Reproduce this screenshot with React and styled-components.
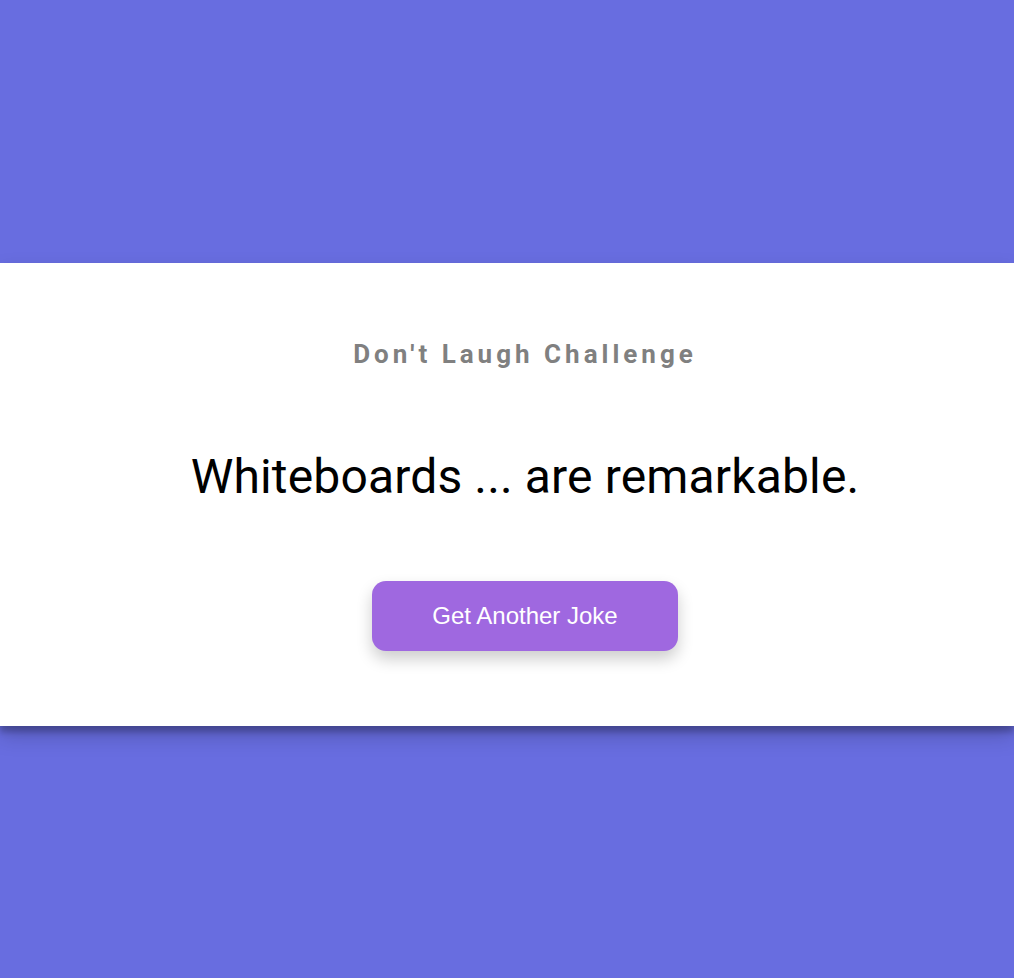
import React from "react";
import styled, { createGlobalStyle } from "styled-components";

const GlobalStyle = createGlobalStyle`
  html, body {
    margin: 0;
    padding: 0;
    background: #686de0;
  }
`;

function App() {
  return (
    <Root>
      <GlobalStyle />
      <Card>
        <Title>Don't Laugh Challenge</Title>
        <Joke>Whiteboards ... are remarkable.</Joke>
        <JokeButton>Get Another Joke</JokeButton>
      </Card>
    </Root>
  );
}

const Root = styled.div`
  height: 978px;
  display: flex;
  flex-direction: column;
  justify-content: flex-start;
  padding-top: 263px;
  box-sizing: border-box;
  background-color: #686de0;
`;

const Card = styled.div`
  height: 463px;
  box-sizing: border-box;
  background-color: #ffffff;
  box-shadow: 0 10px 20px rgba(0, 0, 0, 0.19), 0 6px 6px rgba(0, 0, 0, 0.23);
  display: flex;
  flex-direction: column;
  align-items: center;
  padding: 74px 0 0 36px;
`;

const Title = styled.h3`
  margin: 0;
  font-family: Roboto, sans-serif;
  font-weight: 700;
  font-size: 26px;
  letter-spacing: 4px;
  color: #808080;
  line-height: 34px;
`;

const Joke = styled.div`
  margin-top: 78px;
  font-family: Roboto, sans-serif;
  font-weight: 400;
  font-size: 48px;
  letter-spacing: 0.15px;
  color: #000000;
  line-height: 56px;
`;

const JokeButton = styled.button`
  margin-top: 76px;
  width: 306px;
  height: 70px;
  border: none;
  border-radius: 14px;
  background-color: #9f68e0;
  color: #ffffff;
  font-family: "Liberation Sans", Arial, sans-serif;
  font-size: 24px;
  box-shadow: 0 8px 16px rgba(0, 0, 0, 0.2);
  cursor: pointer;
`;

export default App;
